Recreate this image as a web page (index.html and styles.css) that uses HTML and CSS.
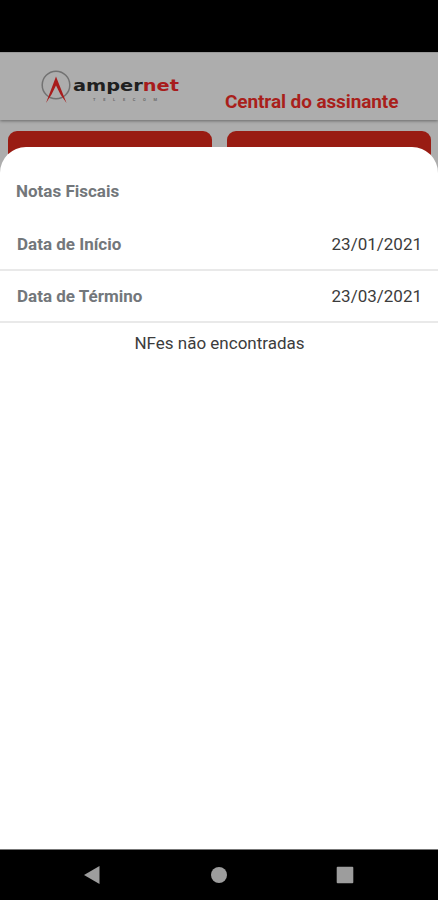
FILE: index.html
```html
<!DOCTYPE html>
<html lang="pt-BR">
<head>
<meta charset="utf-8">
<title>Notas Fiscais</title>
<link rel="stylesheet" href="styles.css">
</head>
<body>
<div class="status-bar"></div>
<header class="header">
  <svg class="logo" width="144" height="40" viewBox="0 0 144 40">
    <circle cx="16" cy="17" r="13.800" fill="none" stroke="#727272" stroke-width="1.5"/>
    <path d="M6 35 16 8.500 26.500 35l-6-8.500L16 17.500l-4.500 9z" fill="#a81c1c"/>
    <text class="wordmark" x="33" y="22.500" textLength="106" lengthAdjust="spacingAndGlyphs">amper<tspan class="wordmark-accent">net</tspan></text>
    <text class="tagline" x="53" y="33" textLength="64">TELECOM</text>
  </svg>
  <h1 class="title">Central do assinante</h1>
</header>
<main class="content">
  <div class="cards">
    <div class="card"></div>
    <div class="card"></div>
  </div>
  <section class="sheet">
    <h2 class="sheet-title">Notas Fiscais</h2>
    <div class="row"><span class="label">Data de Início</span><span class="date">23/01/2021</span></div>
    <div class="row"><span class="label">Data de Término</span><span class="date">23/03/2021</span></div>
    <p class="empty">NFes não encontradas</p>
  </section>
</main>
<nav class="nav-bar">
  <svg width="18" height="20" viewBox="0 0 18 20"><path d="M1 10 16.500 1v18z" fill="#9d9d9d"/></svg>
  <svg width="18" height="18" viewBox="0 0 18 18"><circle cx="9" cy="9" r="8" fill="#9d9d9d"/></svg>
  <svg width="18" height="18" viewBox="0 0 18 18"><rect x=".7" y=".7" width="16.600" height="16.600" rx="1" fill="#9d9d9d"/></svg>
</nav>
</body>
</html>
```
FILE: styles.css
```css
* { box-sizing: border-box; }
body {
  margin: 0;
  height: 900px;
  display: flex;
  flex-direction: column;
  overflow: hidden;
  background: #adadad;
  color: #3c3c3c;
  font-family: Roboto, sans-serif;
}
.status-bar { height: 52px; background: #000; }
.header {
  height: 68px;
  display: flex;
  align-items: flex-start;
  padding: 15px 0 0 40px;
  background: #adadad;
  border-top: 1px solid #999;
  box-shadow: 0 1px 3px rgba(0, 0, 0, .4);
}
.logo { flex: none; }
.wordmark { font: bold 15.5px "DejaVu Sans", sans-serif; fill: #202020; }
.wordmark-accent { fill: #a81c1c; }
.tagline { font: bold 4px Roboto, sans-serif; fill: #6c6c6c; }
.title {
  margin: 22px 0 0 41px;
  font-size: 19px;
  line-height: 24px;
  letter-spacing: -.1px;
  color: #a91f1b;
  white-space: nowrap;
}
.content { flex: 1; display: flex; flex-direction: column; padding-top: 11px; }
.cards { display: grid; grid-template-columns: 1fr 1fr; gap: 15px; padding: 0 7px 0 8px; }
.card { height: 48px; border-radius: 9px; background: #991c13; }
.sheet {
  position: relative;
  flex: 1;
  margin-top: -32px;
  padding-top: 32px;
  border-radius: 26px 26px 0 0;
  background: #fff;
}
.sheet-title {
  margin: 0 0 16px 16px;
  font-size: 17px;
  line-height: 24px;
  color: #73777b;
}
.row {
  height: 52px;
  display: flex;
  align-items: center;
  justify-content: space-between;
  padding: 0 16px 0 17px;
  border-bottom: 2px solid #e9e9e9;
  font-size: 17px;
}
.label { font-weight: bold; color: #73777b; }
.empty { margin: 8px 0 0 1px; font-size: 17px; line-height: 24px; text-align: center; }
.nav-bar {
  height: 51px;
  display: flex;
  justify-content: space-between;
  align-items: center;
  padding: 0 84px 0 83px;
  background: #000;
  border-top: 1px solid #777;
}
```
